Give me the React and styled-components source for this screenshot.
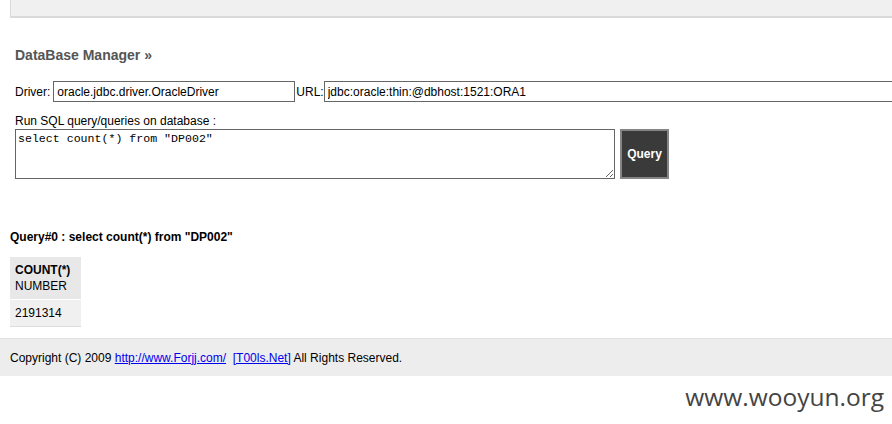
import React from "react";
import styled, { createGlobalStyle } from "styled-components";

const Global = createGlobalStyle`
  body {
    margin: 0;
    background: #fff;
    font-family: "Liberation Sans", Arial, sans-serif;
    font-size: 12px;
    color: #000;
    overflow: hidden;
  }
`;

const Page = styled.div`
  width: 892px;
  height: 424px;
  overflow: hidden;
`;

const TopBar = styled.div`
  margin-left: 10px;
  height: 16px;
  background: #f0f0f0;
  border-left: 1px solid #dadada;
  border-bottom: 2px solid #dadada;
`;

const Main = styled.div`
  padding: 28px 0 0 15px;
`;

const Title = styled.h2`
  margin: 0 0 17px;
  font-size: 14px;
  font-weight: bold;
  color: #555;
  line-height: 18px;
`;

const Row = styled.div`
  display: flex;
  align-items: center;
  white-space: nowrap;
`;

const Label = styled.label`
  line-height: 14px;
`;

const TextInput = styled.input`
  box-sizing: border-box;
  flex: none;
  width: ${(p) => p.$w}px;
  height: 21px;
  margin: 0 1px 0 ${(p) => p.$gap}px;
  padding: 1px 3px;
  border: 1px solid #666;
  font-family: "Liberation Sans", Arial, sans-serif;
  font-size: 12px;
  color: #000;
`;

const Prompt = styled.div`
  margin-top: 12px;
  line-height: 14px;
`;

const QueryRow = styled.div`
  display: flex;
  gap: 5px;
  margin-top: 1px;
`;

const SqlBox = styled.textarea`
  box-sizing: border-box;
  width: 600px;
  height: 50px;
  margin: 0;
  padding: 2px 2px;
  border: 1px solid #666;
  font-family: "Liberation Mono", "Courier New", monospace;
  font-size: 11.6px;
  line-height: 13px;
  color: #000;
  resize: both;
`;

const QueryButton = styled.button`
  box-sizing: border-box;
  width: 49px;
  height: 50px;
  padding: 0;
  background: #3a3a3a;
  border: 2px solid #858585;
  color: #fff;
  font-family: "Liberation Sans", Arial, sans-serif;
  font-size: 12px;
  font-weight: bold;
`;

const Result = styled.div`
  padding: 51px 0 0 10px;
`;

const ResultTitle = styled.div`
  font-weight: bold;
  line-height: 14px;
`;

const Table = styled.table`
  margin-top: 13px;
  border-collapse: collapse;
`;

const HeadCell = styled.th`
  padding: 5px 11px 5px 5px;
  background: #e8e8e8;
  text-align: left;
  font-weight: normal;
  line-height: 16px;
  border-bottom: 1px solid #fff;
  b { font-weight: bold; }
`;

const Cell = styled.td`
  padding: 5px 11px 5px 5px;
  background: #f0f0f0;
  line-height: 16px;
  border-bottom: 1px solid #ddd;
`;

const Footer = styled.div`
  margin-top: 11px;
  height: 37px;
  display: flex;
  align-items: center;
  padding-left: 10px;
  background: #ededed;
  border-top: 1px solid #e2e2e2;
`;

const FooterText = styled.span`
  white-space: pre;
`;

const Link = styled.a`
  color: #00e;
  text-decoration: underline;
`;

const Watermark = styled.div`
  display: flex;
  justify-content: flex-end;
  padding: 6px 8px 0 0;
  font-family: "Open Sans", "DejaVu Sans", sans-serif;
  font-size: 24.5px;
  color: #444;
  line-height: 30px;
`;

export default function App() {
  return (
    <Page>
      <Global />
      <TopBar />
      <Main>
        <Title>DataBase Manager »</Title>
        <Row>
          <Label>Driver:</Label>
          <TextInput $w={242} $gap={3} defaultValue="oracle.jdbc.driver.OracleDriver" />
          <Label>URL:</Label>
          <TextInput $w={580} $gap={0} defaultValue="jdbc:oracle:thin:@dbhost:1521:ORA1" />
        </Row>
        <Prompt>Run SQL query/queries on database :</Prompt>
        <QueryRow>
          <SqlBox defaultValue={'select count(*) from "DP002"'} />
          <QueryButton>Query</QueryButton>
        </QueryRow>
      </Main>
      <Result>
        <ResultTitle>Query#0 : select count(*) from "DP002"</ResultTitle>
        <Table>
          <thead>
            <tr>
              <HeadCell>
                <b>COUNT(*)</b>
                <br />
                NUMBER
              </HeadCell>
            </tr>
          </thead>
          <tbody>
            <tr>
              <Cell>2191314</Cell>
            </tr>
          </tbody>
        </Table>
      </Result>
      <Footer>
        <FooterText>
          Copyright (C) 2009 <Link href="#">http://www.Forjj.com/</Link>{"  "}
          <Link href="#">[T00ls.Net]</Link> All Rights Reserved.
        </FooterText>
      </Footer>
      <Watermark>www.wooyun.org</Watermark>
    </Page>
  );
}
